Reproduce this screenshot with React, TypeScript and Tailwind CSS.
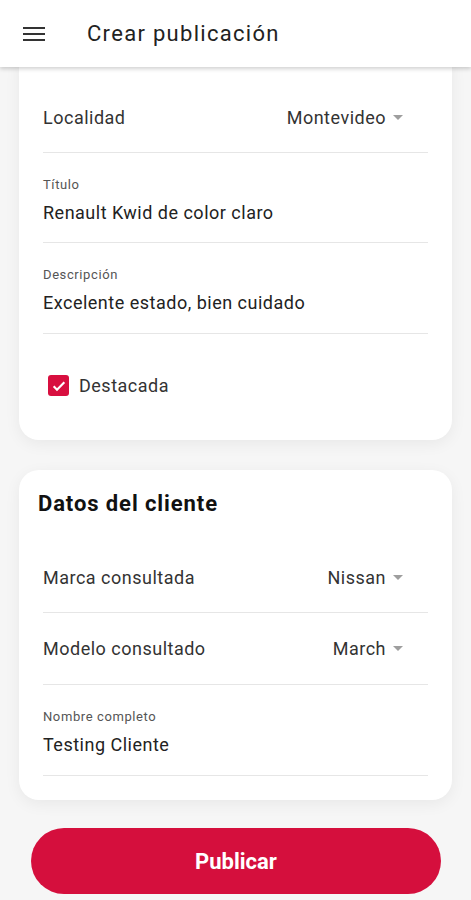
const font = { fontFamily: 'Roboto, "Noto Sans", sans-serif' };

function Caret() {
  return (
    <svg width="10" height="5" viewBox="0 0 10 5" className="ml-[7px]">
      <path d="M0 0h10L5 5z" fill="#9e9e9e" />
    </svg>
  );
}

function SelectRow({ label, value, h }: { label: string; value: string; h: string }) {
  return (
    <div className={`flex items-center justify-between border-b border-[#e6e6e6] ${h}`}>
      <span className="text-[18px] tracking-[0.5px] text-[#333]">{label}</span>
      <span className="flex items-center pr-[25px] text-[18px] tracking-[0.5px] text-[#333]">
        {value}
        <Caret />
      </span>
    </div>
  );
}

function TextField({ label, value, pb = 'pb-[18px]' }: { label: string; value: string; pb?: string }) {
  return (
    <div className={`border-b border-[#e6e6e6] pt-[24px] ${pb}`}>
      <div className="text-[13px] leading-4 tracking-[0.6px] text-[#555]">{label}</div>
      <div className="mt-[8px] text-[18px] leading-6 tracking-[0.5px] text-[#222]">{value}</div>
    </div>
  );
}

export default function App() {
  return (
    <div style={font} className="min-h-[900px] w-[471px] overflow-hidden bg-[#f6f6f6]">
      <header className="relative z-10 flex h-[67px] items-center bg-white shadow-[0_2px_4px_rgba(0,0,0,0.18)]">
        <div className="ml-[23px] flex w-[22px] flex-col gap-[4px]">
          <span className="h-[2px] bg-[#333]" />
          <span className="h-[2px] bg-[#333]" />
          <span className="h-[2px] bg-[#333]" />
        </div>
        <h1 className="ml-[42px] text-[22px] tracking-[1.3px] text-[#222]">Crear publicación</h1>
      </header>

      <div className="mx-[19px] -mt-[20px] rounded-[20px] bg-white px-[24px] pt-[36px] shadow-[0_4px_16px_rgba(0,0,0,0.06)]">
        <SelectRow label="Localidad" value="Montevideo" h="h-[70px]" />
        <TextField label="Título" value="Renault Kwid de color claro" pb="pb-[17px]" />
        <TextField label="Descripción" value="Excelente estado, bien cuidado" />
        <div className="flex items-center pt-[38px] pb-[41px] pl-[5px]">
          <span className="flex h-[21px] w-[21px] items-center justify-center rounded-[3px] bg-[#d80f3f]">
            <svg width="16" height="16" viewBox="0 0 24 24">
              <path d="M4 12.5l5 5L20 6.5" fill="none" stroke="white" strokeWidth="3.2" />
            </svg>
          </span>
          <span className="ml-[10px] text-[18px] tracking-[0.5px] text-[#333]">Destacada</span>
        </div>
      </div>

      <div className="mx-[19px] mt-[30px] rounded-[20px] bg-white px-[24px] pt-[22px] pb-[24px] shadow-[0_4px_16px_rgba(0,0,0,0.06)]">
        <h2 className="-ml-[5px] text-[22px] leading-6 font-bold tracking-[0.9px] text-[#111]">Datos del cliente</h2>
        <div className="mt-[27px]">
          <SelectRow label="Marca consultada" value="Nissan" h="h-[70px]" />
          <SelectRow label="Modelo consultado" value="March" h="h-[72px]" />
          <TextField label="Nombre completo" value="Testing Cliente" />
        </div>
      </div>

      <div className="mt-[28px] px-[31px]">
        <button className="flex h-[66px] w-[410px] items-center justify-center rounded-full bg-[#d50f3d] text-[22px] font-bold text-white">
          Publicar
        </button>
      </div>
    </div>
  );
}
